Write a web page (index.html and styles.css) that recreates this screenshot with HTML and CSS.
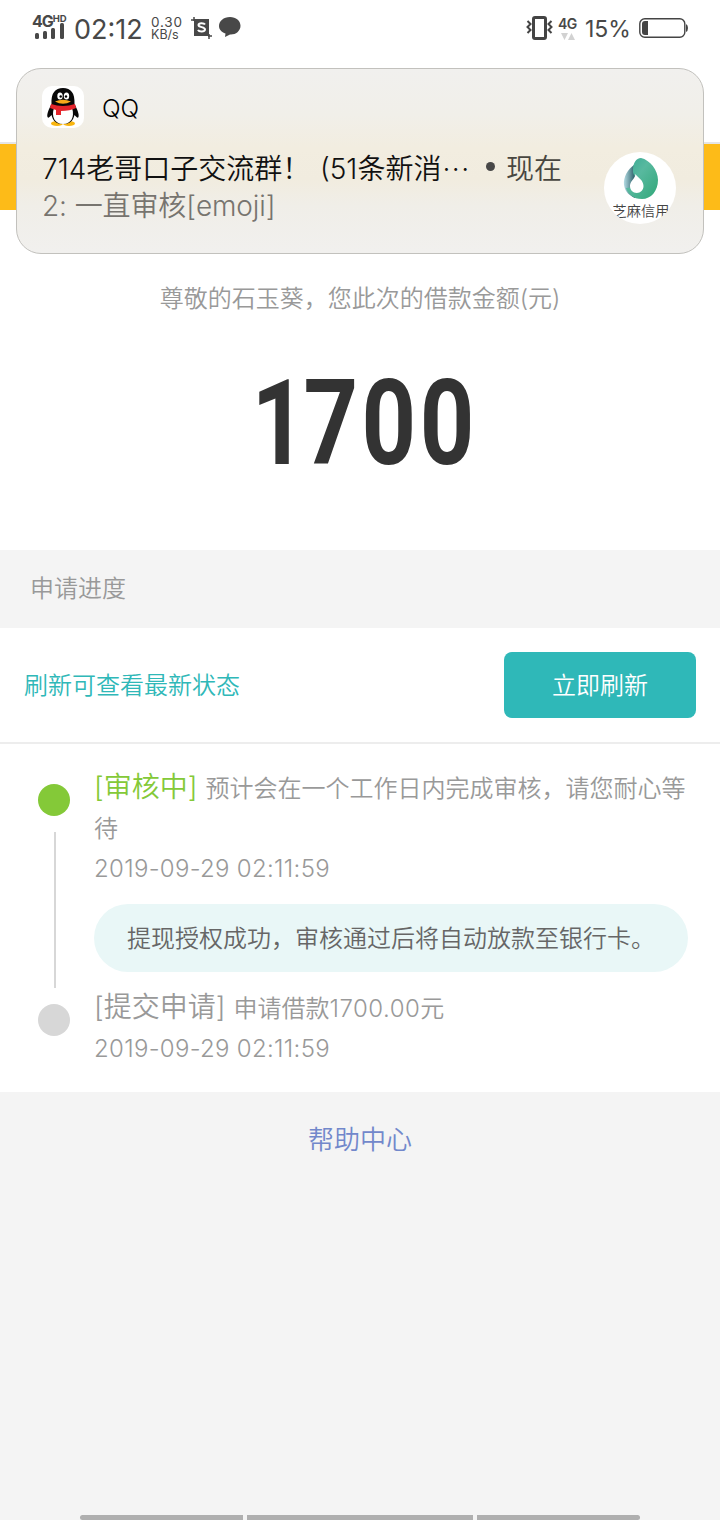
FILE: index.html
```html
<!DOCTYPE html>
<html lang="zh-CN">
<head>
    <meta charset="UTF-8">
    <meta name="viewport" content="width=device-width, initial-scale=1.0">
    <title>申请进度</title>
    <link rel="stylesheet" href="styles.css">
</head>
<body>

<header class="status-bar">
    <div class="signal">
        <div class="network">4G<small>HD</small></div>
        <svg width="32" height="16" viewBox="0 0 32 16" fill="#484848">
            <rect x="0" y="10" width="4" height="6" rx="1.5"/>
            <rect x="8" y="8" width="4" height="8" rx="1.5"/>
            <rect x="16" y="5" width="4" height="11" rx="1.5"/>
            <rect x="25" y="0" width="4" height="16" rx="1.5"/>
        </svg>
    </div>
    <div class="clock">02:12</div>
    <div class="speed"><div class="speed-value">0.30</div><div class="speed-unit">KB/s</div></div>
    <svg class="shot-icon" width="22" height="22" viewBox="0 0 22 22">
        <path d="M3 2H18V19H3Z" fill="#484848"/>
        <path d="M0 3H4M3 0V4M17 19H21M18 17V22" stroke="#484848" stroke-width="1.5"/>
        <path d="M14 7.5C13 5.7 7.700 5.500 7.500 8C7.400 10.800 14.200 9.500 14 12.600C13.600 15.200 8 15.200 7 12.800" fill="none" stroke="#fff" stroke-width="2"/>
    </svg>
    <svg class="chat-icon" width="22" height="21" viewBox="0 0 22 21">
        <path d="M11 0C17 0 21.5 3.8 21.5 8.8C21.5 14.5 16 18 11 17.5L6 20L6.5 16.5C2.5 15 0 12.500 0 9C0 4 4.500 0 11 0Z" fill="#484848"/>
    </svg>
    <div class="status-right">
        <svg width="27" height="24" viewBox="0 0 27 24" fill="none" stroke="#444">
            <rect x="7.500" y="1.500" width="12" height="21" rx="1.500" stroke-width="3"/>
            <path d="M1.500 5L4.500 8L1.500 11L4.500 14L1.500 17M25.500 5L22.500 8L25.500 11L22.500 14L25.500 17" stroke-width="2"/>
        </svg>
        <div class="mobile">
            <div class="mobile-type">4G</div>
            <svg width="14" height="7" viewBox="0 0 14 7" fill="#d2d2d2"><path d="M0 0H7L3.500 7ZM7 7H14L10.500 0Z"/></svg>
        </div>
        <div class="percent">15%</div>
        <svg width="49" height="20" viewBox="0 0 49 20">
            <rect x=".8" y=".8" width="45" height="18.400" rx="5" fill="#fff" stroke="#444" stroke-width="1.400"/>
            <path d="M9 3V17H6Q3 17 3 14V6Q3 3 6 3ZM47 6Q49 7 49 10Q49 13 47 14Z" fill="#444"/>
        </svg>
    </div>
</header>

<div class="banner"></div>

<section class="notification">
    <div class="app">
        <svg width="42" height="42" viewBox="0 0 42 42">
            <rect width="42" height="42" rx="10" fill="#fff"/>
            <ellipse cx="15" cy="37.500" rx="6" ry="2.500" fill="#f9b50f"/>
            <ellipse cx="27" cy="37.500" rx="6" ry="2.500" fill="#f9b50f"/>
            <path d="M9.500 18C9 7 13 2 21 2S33 7 32.500 18C35 23 37.500 28 36.500 31C35.500 33 33.500 30 32.500 29C31 35 28 38 21 38S11 35 9.500 29C8.500 30 6.500 33 5.500 31C4.500 28 7 23 9.500 18Z" fill="#080808"/>
            <path d="M12 22H30C33 31 29 38 21 38S9 31 12 22Z" fill="#fff"/>
            <ellipse cx="18" cy="10" rx="2.700" ry="3.500" fill="#fff"/>
            <ellipse cx="24.500" cy="10" rx="2.700" ry="3.500" fill="#fff"/>
            <circle cx="18.700" cy="10.500" r="1.200"/>
            <circle cx="24" cy="10.500" r="1.200"/>
            <path d="M13 15.500Q21 12 29 15.500Q21 20 13 15.500Z" fill="#f9a91a"/>
            <path d="M9 18Q21 22 33 18L34 22Q28 25 19 25V29H14V24L8 22Z" fill="#e4242b"/>
        </svg>
        <span class="app-name">QQ</span>
    </div>
    <div class="message">
        <div class="message-title"><span class="group-name">714老哥口子交流群！</span><span class="group-count">(51条新消<span class="dots">···</span></span><i class="bullet"></i><span class="when">现在</span></div>
        <div class="message-text">2: 一直审核[emoji]</div>
    </div>
    <div class="avatar">
        <svg width="36" height="42" viewBox="0 0 36 42">
            <defs>
                <linearGradient id="leaf" x1="0" y1="0" x2="1" y2="1">
                    <stop offset="0" stop-color="#37a894"/>
                    <stop offset=".4" stop-color="#58b99f"/>
                    <stop offset="1" stop-color="#30a778"/>
                </linearGradient>
                <linearGradient id="shade" x1="0" y1="0" x2="1" y2="0">
                    <stop offset="0" stop-color="#b5dce4"/>
                    <stop offset=".8" stop-color="#073f48"/>
                </linearGradient>
            </defs>
            <path d="M11 7C5 11 0 19 1 27C2 34 7 38 12 40L18 18Z" fill="url(#shade)"/>
            <path d="M10 12C10 5 13 0 18 0C27 2 35 12 35 22C35 33 28 41 19 41C10 41 5 36 3 30L20 28C20 22 9 20 10 12Z" fill="url(#leaf)"/>
            <path d="M12.500 16C15 20 20.500 22 20.500 28C20.500 32 17.500 35 13.800 35C9.800 35 7 32 7 28C7 23 12 21 12.500 16Z" fill="#fff"/>
        </svg>
        <div class="avatar-label">芝麻信用</div>
    </div>
</section>

<main>
    <section class="loan">
        <p class="loan-title">尊敬的石玉葵，您此次的借款金额(元)</p>
        <div class="amount"><span class="lead">1</span>700</div>
    </section>

    <h2 class="section-title">申请进度</h2>

    <section class="refresh">
        <span class="refresh-tip">刷新可查看最新状态</span>
        <button type="button" class="refresh-btn">立即刷新</button>
    </section>

    <section class="timeline">
        <div class="step step-active">
            <div class="marker"><span class="dot"></span><span class="line"></span></div>
            <div class="step-body">
                <p class="step-text"><span class="state">[审核中]</span>预计会在一个工作日内完成审核，请您耐心等待</p>
                <p class="time">2019-09-29 02:11:59</p>
                <div class="tip">提现授权成功，审核通过后将自动放款至银行卡。</div>
            </div>
        </div>
        <div class="step">
            <div class="marker"><span class="dot"></span></div>
            <div class="step-body">
                <p class="step-text"><span class="state">[提交申请]</span>申请借款<span class="money">1700.00</span>元</p>
                <p class="time">2019-09-29 02:11:59</p>
            </div>
        </div>
    </section>

    <a class="help">帮助中心</a>
</main>

<footer class="nav-hint"><span></span><span></span><span></span></footer>

</body>
</html>
```
FILE: styles.css
```css
* {
    box-sizing: border-box;
}

body {
    margin: 0;
    height: 1520px;
    display: flex;
    flex-direction: column;
    position: relative;
    overflow: hidden;
    background-color: #f4f4f4;
    font-family: Inter, "Noto Sans CJK SC", sans-serif;
    font-weight: 350;
    color: #999;
}

p, h2 {
    margin: 0;
}

svg {
    display: block;
    flex: none;
}

/* status bar */
.status-bar {
    height: 142px;
    padding: 14px 32px 0;
    display: flex;
    align-items: flex-start;
    background-color: #fff;
    color: #484848;
    font-weight: 400;
    white-space: nowrap;
}

.signal {
    width: 42px;
}

.network {
    height: 9px;
    font-size: 16px;
    line-height: 14px;
    font-weight: 700;
    letter-spacing: -1px;
}

.network small {
    display: inline-block;
    height: 10px;
    font-size: 9.5px;
    line-height: 10px;
    vertical-align: 5px;
    letter-spacing: -0.3px;
}

.signal svg {
    margin-left: 3px;
}

.clock {
    width: 77px;
    font-size: 27px;
    line-height: 32px;
}

.speed {
    width: 40px;
    font-size: 13.5px;
    line-height: 13px;
}

.speed-value {
    letter-spacing: 0.8px;
    margin-top: 2px;
}

.speed-unit {
    font-size: 12.5px;
    line-height: 12px;
}

.shot-icon {
    margin-top: 3px;
}

.chat-icon {
    margin: 3px 0 0 6px;
}

.status-right {
    margin-left: auto;
    display: flex;
    align-items: center;
    height: 28px;
}

.mobile {
    width: 27px;
    margin-left: 5px;
}

.mobile-type {
    font-size: 14px;
    font-weight: 600;
    line-height: 15px;
    letter-spacing: -0.5px;
}

.mobile svg {
    margin: 2px 0 0 3px;
}

.percent {
    width: 54px;
    padding-top: 2px;
    font-size: 23px;
}

.banner {
    height: 68px;
    border-top: 2px solid #e5e5e5;
    background-color: #fdbb18;
}

/* notification card, floats over the page */
.notification {
    position: absolute;
    top: 68px;
    left: 16px;
    width: 688px;
    height: 186px;
    padding: 17px 25px;
    border: 1px solid #c2c1bd;
    border-radius: 25px;
    background: linear-gradient(#f1f0ee 0%, #f1efe9 25%, #f2ede0 43%, #f1ecdf 60%, #f0eee8 74%, #f1f0ee 100%);
}

.app {
    display: flex;
    align-items: center;
    gap: 18px;
}

.app-name {
    padding-top: 2px;
    font-size: 24.5px;
    color: #000;
}

.message {
    margin-top: 20px;
    white-space: nowrap;
}

.message-title {
    display: flex;
    align-items: center;
    height: 37px;
    font-size: 28px;
    color: #111;
}

.group-name {
    width: 278px;
}

.group-count {
    width: 166px;
}

.dots {
    margin-left: 1px;
    letter-spacing: 1.5px;
}

.bullet {
    width: 9px;
    height: 9px;
    margin-right: 11px;
    border-radius: 50%;
    background-color: #484848;
}

.when {
    color: #484640;
}

.message-text {
    padding-top: 2px;
    font-size: 28px;
    line-height: 38px;
    letter-spacing: -0.1px;
    color: #77746f;
}

.avatar {
    position: absolute;
    top: 83px;
    left: 587px;
    width: 72px;
    height: 72px;
    padding: 6px 0 0 2px;
    display: flex;
    flex-direction: column;
    align-items: center;
    border-radius: 50%;
    overflow: hidden;
    background-color: #fff;
}

.avatar-label {
    height: 16px;
    margin-top: 2px;
    overflow: hidden;
    font-size: 14.2px;
    line-height: 18px;
    white-space: nowrap;
    color: #444;
}

/* loan amount */
.loan {
    height: 340px;
    padding-top: 71px;
    background-color: #fff;
    text-align: center;
}

.loan-title {
    font-size: 24px;
    line-height: 36px;
}

.amount {
    margin-top: 37px;
    padding-left: 4px;
    font-family: Roboto, sans-serif;
    font-size: 119px;
    font-weight: 700;
    line-height: 140px;
    letter-spacing: 4.5px;
    color: #333;
    transform: scaleX(0.8);
}

.lead {
    margin: 0 -8px 0 8px;
}

.section-title {
    height: 78px;
    padding-left: 30px;
    font-size: 24px;
    font-weight: 350;
    line-height: 78px;
}

.refresh {
    height: 116px;
    padding: 0 24px 4px;
    display: flex;
    align-items: center;
    justify-content: space-between;
    background-color: #fff;
    border-bottom: 2px solid #ededed;
}

.refresh-tip {
    font-size: 24px;
    color: #2fb8b8;
}

.refresh-btn {
    width: 192px;
    height: 66px;
    margin-top: 4px;
    padding: 0 0 4px;
    border: none;
    border-radius: 8px;
    background-color: #2fb8b8;
    color: #fff;
    font: inherit;
    font-size: 24px;
}

/* progress steps */
.timeline {
    height: 348px;
    padding: 24px 32px 0 38px;
    background-color: #fff;
}

.step {
    display: flex;
    height: 220px;
}

.marker {
    width: 56px;
    flex: none;
    padding-top: 16px;
}

.step-body {
    padding-top: 1px;
}

.dot {
    display: block;
    width: 32px;
    height: 32px;
    border-radius: 50%;
    background-color: #d7d7d7;
}

.step-active .dot {
    background-color: #84c938;
}

.line {
    display: block;
    width: 2px;
    height: 156px;
    margin: 16px 0 0 16px;
    background-color: #d7d7d7;
}

.step-text {
    font-size: 24px;
    line-height: 40px;
}

.state {
    margin-right: 8px;
    font-size: 28px;
    line-height: 36px;
}

.step-active .state {
    color: #84c938;
}

.time {
    font-size: 24px;
    line-height: 40px;
    letter-spacing: 0.3px;
}

.money {
    letter-spacing: 0.5px;
}

.tip {
    width: 594px;
    height: 68px;
    margin-top: 15px;
    padding-left: 33px;
    border-radius: 34px;
    background-color: #e9f7f7;
    font-size: 24px;
    line-height: 69px;
    white-space: nowrap;
    color: #666;
}

.help {
    display: block;
    padding-top: 29px;
    font-size: 26px;
    line-height: 38px;
    text-align: center;
    color: #7288cb;
}

.nav-hint {
    margin-top: auto;
    height: 5px;
    padding: 0 80px;
    display: flex;
    gap: 4px;
    background-color: #f4f4f4;
}

.nav-hint span {
    width: 163px;
    background-color: #afafaf;
}

.nav-hint span:nth-child(2) {
    flex: 1;
}

.nav-hint span:first-child {
    border-radius: 3px 0 0 3px;
}

.nav-hint span:last-child {
    border-radius: 0 3px 3px 0;
}
```
